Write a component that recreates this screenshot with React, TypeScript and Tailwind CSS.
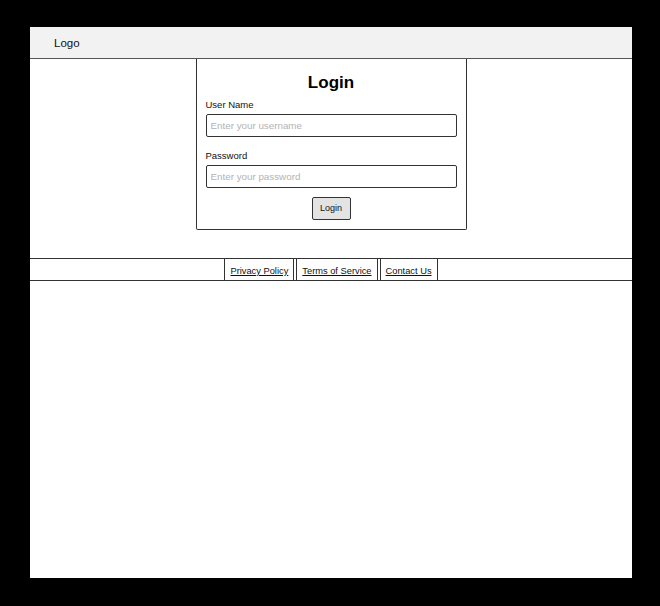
const font = 'font-["Comic_Sans_MS","Liberation_Sans",sans-serif]';

function Field({ label, placeholder, type = 'text' }: { label: string; placeholder: string; type?: string }) {
  return (
    <div className="flex flex-col">
      <label className="text-[9.5px] leading-[12px] text-[#111] mb-[3px]">{label}</label>
      <input
        type={type}
        placeholder={placeholder}
        className="h-[23px] w-[251px] border-[1.5px] border-[#333] rounded-[2px] bg-white px-[4px] text-[9.8px] placeholder:text-[#b3b3b3] outline-none"
      />
    </div>
  );
}

export default function App() {
  return (
    <div className={`min-h-screen bg-black pt-[27px] pl-[30px] pr-[28px] pb-[28px] ${font}`}>
      <div className="h-[551px] bg-white flex flex-col">
        {/* Header */}
        <header className="h-[32px] shrink-0 bg-[#f2f2f2] border-b-[1.5px] border-[#555] flex items-center pl-[24px] pt-[3px]">
          <span className="text-[11.5px] text-[#111]">Logo</span>
        </header>

        {/* Login card */}
        <div className="flex justify-center">
          <div className="w-[271px] h-[171px] border-x-[1.5px] border-b-[1.5px] border-[#333] rounded-bl-[2px] rounded-br-[2px] px-[9px] pt-[14px]">
            <h1 className="text-center font-bold text-[17px] leading-[20px] text-black mb-[6px]">Login</h1>
            <div className="flex flex-col gap-[13px]">
              <Field label="User Name" placeholder="Enter your username" />
              <Field label="Password" placeholder="Enter your password" type="password" />
            </div>
            <div className="flex justify-center mt-[9px]">
              <button className="h-[23px] w-[39px] bg-[#e3e3e3] border-[1.5px] border-[#333] rounded-[2px] text-[9px] text-[#111]">
                Login
              </button>
            </div>
          </div>
        </div>

        {/* Footer */}
        <footer className="mt-[28px] h-[23px] border-y-[1.5px] border-[#333] flex justify-center">
          <nav className="flex gap-[2px]">
            {['Privacy Policy', 'Terms of Service', 'Contact Us'].map((item) => (
              <a
                key={item}
                href="#"
                className="h-full border-x-[1.5px] border-[#333] px-[5px] pt-[5px] flex items-center text-[9.3px] text-[#111] underline"
              >
                {item}
              </a>
            ))}
          </nav>
        </footer>
      </div>
    </div>
  );
}
